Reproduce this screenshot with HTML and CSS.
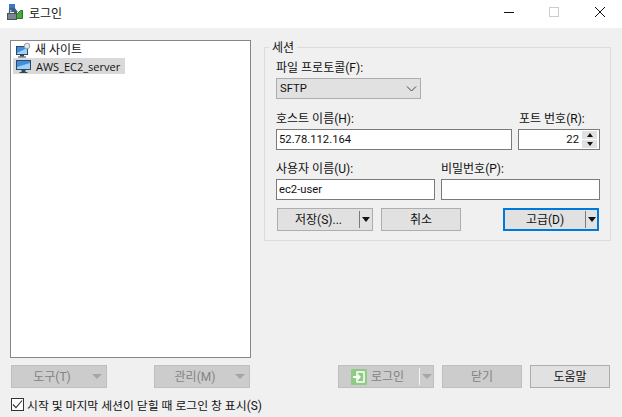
FILE: index.html
```html
<!DOCTYPE html>
<html lang="ko">
<head>
<meta charset="utf-8">
<title>로그인</title>
<link rel="stylesheet" href="styles.css">
</head>
<body>
<div class="window">
  <header class="titlebar">
    <svg class="app-icon" width="16" height="16" viewBox="0 0 16 16">
      <rect x="2" y="0" width="6" height="6" fill="#3c78c8"/>
      <path d="M3 8l4-5 4 5z" fill="#2d62ad"/>
      <path d="M8.500 7.500l2 2 3-3h2v8h-7z" fill="#49a838" stroke="#1f7a1c"/>
      <rect x="0.500" y="9.500" width="9" height="6" fill="#7d8590" stroke="#4a5058"/>
      <path d="M2.500 9.500V7a2.500 2.500 0 0 1 5 0v2.500" fill="none" stroke="#555b63" stroke-width="1.300"/>
    </svg>
    <span class="title-text">로그인</span>
    <div class="win-controls">
      <svg width="12" height="12" viewBox="0 0 12 12"><path d="M2 6.500h10" stroke="#111" fill="none"/></svg>
      <svg width="12" height="12" viewBox="0 0 12 12"><rect x="1.500" y="1.500" width="9" height="9" fill="none" stroke="#ccc"/></svg>
      <svg width="12" height="12" viewBox="0 0 12 12"><path d="M1 1l10 10M11 1L1 11" stroke="#111" fill="none"/></svg>
    </div>
  </header>

  <main class="content">
    <div class="site-list">
      <div class="site-item">
        <svg width="17" height="16" viewBox="0 0 17 16">
          <rect x="1.500" y="4.500" width="11" height="8" fill="#3f8fe0" stroke="#33475c"/>
          <path d="M2 11l10-5v6H2z" fill="#9fd0f5"/>
          <rect x="5" y="13" width="4" height="1.500" fill="#33475c"/>
          <rect x="3" y="14.500" width="8" height="1" fill="#33475c"/>
          <circle cx="12" cy="4" r="2.800" fill="#e4e6ea" stroke="#9a9ea5"/>
        </svg>
        <span class="new-site">새 사이트</span>
      </div>
      <div class="site-item selected">
        <svg width="17" height="16" viewBox="0 0 17 16">
          <rect x="1.500" y="2.500" width="14" height="9" fill="#3f8fe0" stroke="#33475c"/>
          <path d="M2 9l13-4v6H2z" fill="#9fd0f5"/>
          <rect x="6.500" y="12" width="4" height="2" fill="#33475c"/>
          <rect x="4.500" y="14" width="8" height="1" fill="#33475c"/>
        </svg>
        <span class="server-name">AWS_EC2_server</span>
      </div>
    </div>

    <fieldset class="session">
      <legend>세션</legend>
      <label class="field-label proto-label">파일 프로토콜(F):</label>
      <div class="select">
        <span class="value">SFTP</span>
        <svg width="11" height="6" viewBox="0 0 11 6"><path d="M1 .5l4.500 4.500L10 .5" fill="none" stroke="#444"/></svg>
      </div>

      <div class="row host-row">
        <div class="field host-field">
          <label class="field-label">호스트 이름(H):</label>
          <div class="input value">52.78.112.164</div>
        </div>
        <div class="field port-field">
          <label class="field-label port-label">포트 번호(R):</label>
          <div class="input port-input value">
            <span>22</span>
            <div class="spinner">
              <div class="spin"><i class="tri up"></i></div>
              <div class="spin"><i class="tri down"></i></div>
            </div>
          </div>
        </div>
      </div>

      <div class="row user-row">
        <div class="field user-field">
          <label class="field-label">사용자 이름(U):</label>
          <div class="input value">ec2-user</div>
        </div>
        <div class="field pass-field">
          <label class="field-label">비밀번호(P):</label>
          <div class="input"></div>
        </div>
      </div>

      <div class="row session-buttons">
        <div class="btn split save"><span class="btn-main">저장(S)...</span><span class="sep"></span><i class="tri down big"></i></div>
        <div class="btn cancel">취소</div>
        <div class="btn split advanced"><span class="btn-main">고급(D)</span><span class="sep"></span><i class="tri down big"></i></div>
      </div>
    </fieldset>
  </main>

  <div class="actions">
    <div class="btn disabled tool"><span class="btn-main">도구(T)</span><i class="tri down wide"></i></div>
    <div class="btn disabled manage"><span class="btn-main">관리(M)</span><i class="tri down wide"></i></div>
    <div class="spacer"></div>
    <div class="btn disabled login">
      <svg width="16" height="16" viewBox="0 0 16 16">
        <rect width="16" height="16" rx="1" fill="#8fcb85"/>
        <rect x="6" y="3" width="7" height="10" fill="none" stroke="#fff" stroke-width="1.500"/>
        <path d="M2 7h5V5l3 3-3 3V9H2z" fill="#fff"/>
      </svg>
      <span class="login-text">로그인</span>
      <span class="sep light"></span>
      <i class="tri down wide"></i>
    </div>
    <div class="btn disabled close">닫기</div>
    <div class="btn help">도움말</div>
  </div>

  <label class="startup">
    <span class="checkbox">
      <svg width="11" height="11" viewBox="0 0 11 11"><path d="M1 5.500l3 3.200L10 1.500" fill="none" stroke="#333" stroke-width="1.100"/></svg>
    </span>
    <span class="startup-text">시작 및 마지막 세션이 닫힐 때 로그인 창 표시(S)</span>
  </label>
</div>
</body>
</html>
```
FILE: styles.css
```css
* { box-sizing: border-box; }
html, body { margin: 0; padding: 0; }
body {
  font-family: Roboto, "Noto Sans CJK KR", sans-serif;
  font-size: 12px;
  color: #111;
  background: #f0f0f0;
}
.window {
  width: 622px;
  height: 417px;
  display: flex;
  flex-direction: column;
  background: #f0f0f0;
  overflow: hidden;
}
.titlebar {
  height: 28px;
  background: #fff;
  display: flex;
  align-items: center;
  padding: 0 0 4px 7px;
  flex: none;
}
.app-icon { margin-right: 6px; }
.title-text { font-size: 12px; }
.win-controls {
  margin-left: auto;
  display: flex;
  gap: 34px;
  padding-right: 16px;
}
.content {
  display: flex;
  gap: 13px;
  padding: 12px 0 0 10px;
  height: 330px;
  flex: none;
}
.site-list {
  width: 241px;
  height: 318px;
  background: #fff;
  border: 1px solid #82878c;
  padding: 1px 2px;
  flex: none;
}
.site-item {
  display: flex;
  align-items: center;
  height: 16px;
  gap: 4px;
  padding-left: 2px;
  font-size: 11px;
}
.new-site { padding-bottom: 4px; font-size: 12px; margin-left: -1px; }
.server-name { font-family: "Open Sans", sans-serif; }
.site-item.selected { background: #d9d9d9; width: 112px; }
.session {
  width: 347px;
  height: 202px;
  margin: -1px 0 0;
  padding: 0 0 0 11px;
  border: 1px solid #dcdcdc;
  min-width: 0;
  align-self: flex-start;
}
.session legend {
  margin-left: -7px;
  padding: 2px 3px 0;
  line-height: 14px;
}
.field-label { display: block; height: 16px; line-height: 16px; white-space: nowrap; }
.proto-label { margin-top: 5px; height: 18px; }
.value { font-size: 11.250px; }
.select {
  width: 145px;
  height: 21px;
  background: #e1e1e1;
  border: 1px solid #adadad;
  display: flex;
  align-items: center;
  justify-content: space-between;
  padding: 0 3px;
}
.row { display: flex; }
.host-row { margin-top: 12px; }
.user-row { margin-top: 11px; }
.field { display: flex; flex-direction: column; }
.host-field { width: 236px; }
.port-field { width: 82px; margin-left: 6px; }
.port-label { margin-left: 1px; }
.user-field { width: 159px; }
.pass-field { width: 159px; margin-left: 6px; }
.field .field-label { margin-bottom: 2px; }
.input {
  height: 21px;
  background: #fff;
  border: 1px solid #7a7a7a;
  display: flex;
  align-items: center;
  padding-left: 2px;
  white-space: nowrap;
}
.port-input { justify-content: flex-end; padding: 0 0 0 2px; }
.spinner {
  width: 15px;
  margin: 0 2px 0 3px;
  display: flex;
  flex-direction: column;
  gap: 1px;
}
.spin {
  height: 8px;
  background: #e1e1e1;
  display: flex;
  align-items: center;
  justify-content: center;
}
.tri { display: block; width: 0; height: 0; border-style: solid; border-color: transparent; }
.tri.up { border-width: 0 3.500px 4px; border-bottom-color: #111; }
.tri.down { border-width: 4px 3.500px 0; border-top-color: #111; }
.tri.big { border-width: 5px 4px 0; margin: 0 2px; }
.tri.wide { border-width: 5px 5px 0; border-top-color: #a6a6a6; margin: 0 4px 0 0; }
.advanced .tri.big { margin-right: 1px; }
.btn {
  height: 23px;
  background: #e1e1e1;
  border: 1px solid #adadad;
  display: flex;
  align-items: center;
  justify-content: center;
  flex: none;
}
.btn-main { flex: 1; text-align: center; padding-bottom: 2px; }
.sep { width: 1px; height: 17px; background: #7a7a7a; }
.session-buttons { margin-top: 8px; margin-left: 1px; }
.save { width: 96px; }
.cancel { width: 80px; margin-left: 8px; padding-bottom: 2px; }
.advanced { width: 96px; margin-left: 42px; border: 2px solid #0078d7; }
.actions {
  display: flex;
  padding: 0 12px 0 11px;
  margin-top: 7px;
  flex: none;
}
.spacer { flex: 1; }
.disabled { background: #cccccc; border-color: #bfbfbf; color: #838383; }
.tool, .manage { width: 96px; }
.manage { margin-left: 47px; }
.login { width: 96px; padding-left: 12px; }
.login-text { flex: 1; padding: 0 0 2px 4px; }
.sep.light { background: #f4f4f4; margin-right: 2px; }
.login .tri.wide { margin-right: 1px; }
.close { width: 80px; margin-left: 8px; padding-bottom: 2px; }
.help { width: 80px; margin-left: 8px; padding-bottom: 2px; }
.startup {
  display: flex;
  align-items: center;
  margin-top: 9px;
  padding-left: 11px;
  height: 14px;
  gap: 3px;
  white-space: nowrap;
}
.startup-text { font-size: 11.850px; }
.checkbox {
  width: 13px;
  height: 13px;
  background: #fff;
  border: 1px solid #333;
  display: flex;
  align-items: center;
  justify-content: center;
}
```
